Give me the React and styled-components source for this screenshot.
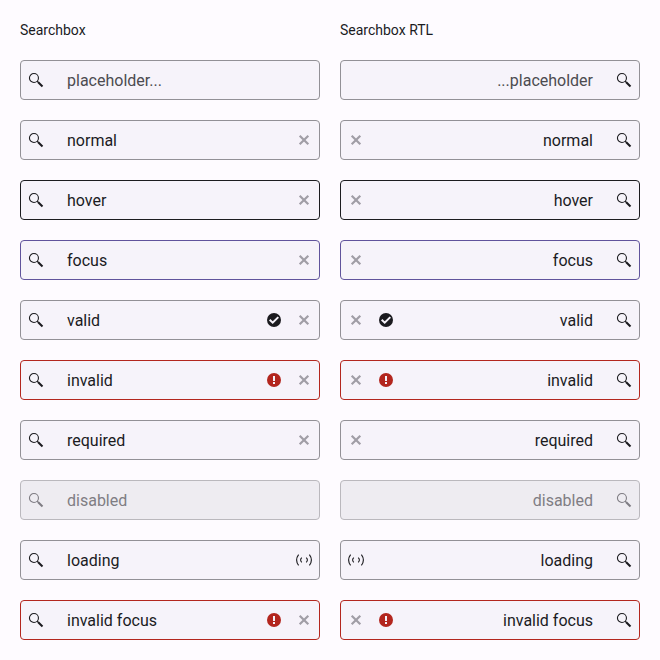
import React from "react";
import styled, { createGlobalStyle } from "styled-components";

const GlobalStyle = createGlobalStyle`
  *, *::before, *::after { box-sizing: border-box; }
  body {
    margin: 0;
    background: #fefbff;
    color: #1b1b1f;
    font-family: Roboto, sans-serif;
    font-size: 14px;
    line-height: 20px;
  }
`;

const Page = styled.main`
  display: grid;
  grid-template-columns: 300px 300px;
  gap: 20px;
  min-height: 660px;
  padding: 20px;
`;

const Column = styled.section`
  display: flex;
  flex-direction: column;
  gap: 20px;
`;

const Heading = styled.h1`
  margin: 0;
  font-size: 14px;
  font-weight: 400;
  line-height: 20px;
`;

const borders = {
  hover: "#1b1b1f",
  focus: "#60539c",
  invalid: "#b3261e",
};

const Field = styled.div`
  display: flex;
  align-items: center;
  height: 40px;
  padding: 0 7px;
  border: 1px solid ${(p) => borders[p.$state] || "#929096"};
  border-radius: 4px;
  background: #f6f3fa;
  ${(p) =>
    p.$state === "disabled" &&
    `
    border-color: #bab8bd;
    background: #eeecf1;
    color: #7f7d83;
  `}
`;

const Value = styled.span`
  flex: 1;
  margin-inline-start: 23px;
  padding-top: 2px;
  font-size: 16px;
  line-height: 24px;
  color: ${(p) => (p.$placeholder ? "#4c4b50" : "inherit")};
`;

const Icon = styled.svg`
  display: block;
  flex: none;
  width: 16px;
  height: 16px;
  color: ${(p) => p.$color || "inherit"};
`;

const Trailing = styled.div`
  display: flex;
  gap: 14px;
`;

const SearchIcon = () => (
  <Icon viewBox="0 0 16 16" fill="none" stroke="currentColor">
    <circle cx="5.95" cy="5.95" r="4.5" strokeWidth="1.1" />
    <path d="M9.1 9.1L10.7 10.7" strokeWidth="1.3" />
    <path d="M10.2 10.2L14.5 14.5" strokeWidth="2" />
  </Icon>
);

const ClearIcon = () => (
  <Icon viewBox="0 0 16 16" $color="#a09ea6" fill="none" stroke="currentColor">
    <path d="M3.7 3.7L12.3 12.3M12.3 3.7L3.7 12.3" strokeWidth="2.2" />
  </Icon>
);

const ValidIcon = () => (
  <Icon viewBox="0 0 16 16">
    <circle cx="8" cy="8" r="7" fill="currentColor" />
    <path d="M3.7 7.7L6.7 10.7L12.3 5.1" fill="none" stroke="#f6f3fa" strokeWidth="2" />
  </Icon>
);

const InvalidIcon = () => (
  <Icon viewBox="0 0 16 16" $color="#b3261e">
    <circle cx="8" cy="8" r="7" fill="currentColor" />
    <path d="M7 4h2v5H7zM7 10h2v2H7z" fill="#f6f3fa" />
  </Icon>
);

const LoadingIcon = () => (
  <Icon viewBox="0 0 16 16" fill="none" stroke="currentColor">
    <path d="M2.6 2.6Q-1.4 8 2.6 13.4M13.4 2.6Q17.4 8 13.4 13.4" strokeWidth="1.1" />
    <path d="M5.8 5.7Q3.4 8 5.8 10.3M10.2 5.7Q12.6 8 10.2 10.3" strokeWidth="1.1" />
  </Icon>
);

const fields = [
  { text: "placeholder...", placeholder: true },
  { text: "normal", clear: true },
  { text: "hover", state: "hover", clear: true },
  { text: "focus", state: "focus", clear: true },
  { text: "valid", status: ValidIcon, clear: true },
  { text: "invalid", state: "invalid", status: InvalidIcon, clear: true },
  { text: "required", clear: true },
  { text: "disabled", state: "disabled" },
  { text: "loading", status: LoadingIcon },
  { text: "invalid focus", state: "invalid", status: InvalidIcon, clear: true },
];

function Searchbox({ text, state, placeholder, clear, status: Status, dir }) {
  return (
    <Field $state={state} dir={dir}>
      <SearchIcon />
      <Value $placeholder={placeholder}>{text}</Value>
      <Trailing>
        {Status && <Status />}
        {clear && <ClearIcon />}
      </Trailing>
    </Field>
  );
}

export default function App() {
  return (
    <>
      <GlobalStyle />
      <Page>
        <Column>
          <Heading>Searchbox</Heading>
          {fields.map((f) => (
            <Searchbox key={f.text} {...f} dir="ltr" />
          ))}
        </Column>
        <Column>
          <Heading>Searchbox RTL</Heading>
          {fields.map((f) => (
            <Searchbox key={f.text} {...f} dir="rtl" />
          ))}
        </Column>
      </Page>
    </>
  );
}
